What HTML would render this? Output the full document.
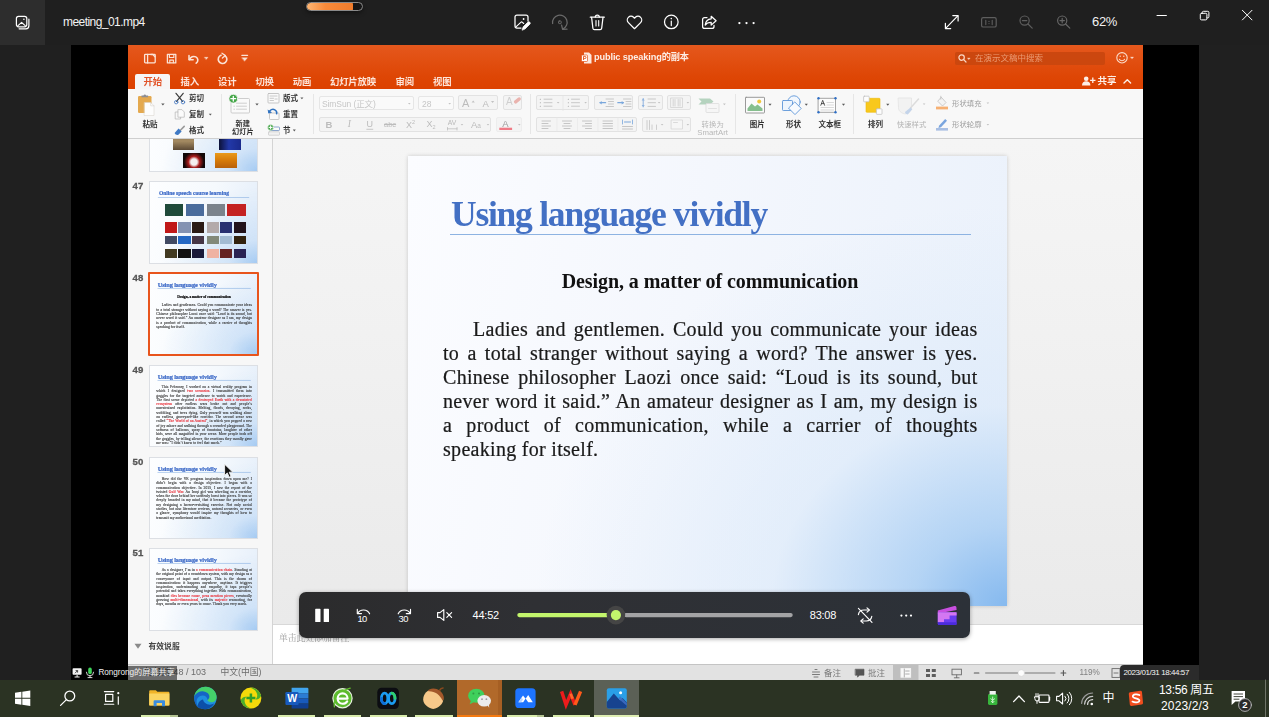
<!DOCTYPE html>
<html lang="zh">
<head>
<meta charset="utf-8">
<title>meeting_01.mp4</title>
<style>
html,body{margin:0;padding:0;background:#202020;}
body{width:1269px;height:717px;overflow:hidden;font-family:"Liberation Sans","Noto Sans CJK SC",sans-serif;}
#root{position:relative;width:1269px;height:717px;overflow:hidden;background:#202020;}
.abs{position:absolute;}
.t{position:absolute;white-space:nowrap;line-height:1;}
svg{position:absolute;overflow:visible;}
/* top bar */
#topbar{position:absolute;left:0;top:0;width:1269px;height:45px;background:#1f1f1f;}
#iconbox{position:absolute;left:0;top:0;width:45px;height:45px;background:#2d2d2d;}
/* video */
#video{position:absolute;left:71px;top:45px;width:1128px;height:635px;background:#000;}
#ppt{position:absolute;left:57px;top:0;width:1015px;height:635px;background:#ececec;overflow:hidden;}
#pptbar{position:absolute;left:0;top:0;width:1015px;height:45px;background:linear-gradient(#e5581d,#de4605 70%,#dc4100);}
#ribbon{position:absolute;left:0;top:44px;width:1015px;height:49px;background:#f8f8f8;border-bottom:1px solid #cfcfcf;}
#leftpane{position:absolute;left:0;top:94px;width:144px;height:525px;background:#f7f7f7;border-right:1px solid #d4d4d4;}
#edit{position:absolute;left:145px;top:94px;width:870px;height:486px;background:linear-gradient(#f5f5f5,#f1f1f1 40%,#eaeaea);}
#notes{position:absolute;left:145px;top:579px;width:870px;height:40px;background:#fff;border-top:1px solid #d8d8d8;}
#status{position:absolute;left:0;top:619px;width:1015px;height:16px;background:#e2e2e2;border-top:1px solid #c4c4c4;}
#slide{position:absolute;left:280px;top:111px;width:599px;height:450px;background:#fff;box-shadow:0 0 4px rgba(0,0,0,.18);}
.tab{top:32px;font-size:9.400px;font-weight:bold;color:#fde4d8;letter-spacing:-0.2px;}
.bx{position:absolute;border:1px solid #e2e2e2;background:#f4f4f4;border-radius:2px;box-sizing:border-box;}
.sp{position:absolute;top:5px;width:1px;height:40px;background:#e6e6e6;}
.rl{font-size:7.500px;font-weight:bold;color:#333;}
.gl{color:#bcbcbc;}
#ribsvg .ar{fill:#5a5a5a;stroke:none;}
#ribsvg .arl{fill:#c2c2c2;stroke:none;}
#slide{background:radial-gradient(ellipse 470px 400px at 100% 100%,rgba(128,182,238,.95) 0%,rgba(158,200,242,.72) 20%,rgba(205,226,248,.38) 50%,rgba(235,243,252,0) 100%),linear-gradient(100deg,#fbfcff 0%,#f4f7fd 45%,#eaf1fb 100%);}
#stitle{font:bold 35.500px "Liberation Serif",serif;color:#4370c4;letter-spacing:-1.24px;line-height:40px;}
#ssub{font:bold 20px "Liberation Serif",serif;color:#111;line-height:24px;letter-spacing:-0.07px;}
#sbody{-webkit-text-stroke:0.22px #1a1a1a;position:absolute;left:35px;top:161.300px;width:534.500px;font:20px "Liberation Serif",serif;color:#1a1a1a;letter-spacing:0.3px;}
#sbody .ln{height:24px;line-height:24px;white-space:nowrap;text-align:justify;text-align-last:justify;box-sizing:border-box;white-space:normal;overflow:visible;}
#leftpane{overflow:hidden;}
.th{position:absolute;left:22.300px;width:107.200px;height:80.600px;overflow:hidden;background:radial-gradient(ellipse 95px 76px at 100% 100%,rgba(150,194,240,.8) 0%,rgba(185,214,245,.5) 30%,rgba(225,238,251,0) 100%),linear-gradient(100deg,#fdfeff 0%,#f5f9fd 55%,#e4eefa 100%);box-shadow:0 0 0 1px #dcdfe4;}
.th i{position:absolute;display:block;}
.mini{position:absolute;left:0;top:0;width:599px;height:450px;transform:scale(0.179);transform-origin:0 0;}
.mt{position:absolute;left:43px;top:38px;font:bold 35.500px/40px "Liberation Serif",serif;color:#3f6cc8;-webkit-text-stroke:1.3px #3f6cc8;letter-spacing:-0.6px;white-space:nowrap;}
.mu{position:absolute;left:42px;top:78px;width:521px;height:3px;background:#7fa9e0;}
.ms{-webkit-text-stroke:1px #000;position:absolute;left:2px;width:600px;text-align:center;top:114px;font:bold 20px/24px "Liberation Serif",serif;color:#000;white-space:nowrap;}
.mb{position:absolute;left:35px;width:534.500px;font:20px/24px "Liberation Serif",serif;color:#3a3a3a;-webkit-text-stroke:0.65px #3a3a3a;text-align:justify;letter-spacing:0.55px;}
.mb .r{color:#e8343c;-webkit-text-stroke:0.8px #e8343c;font-weight:normal;}
.tn{left:4.500px;font-size:9.600px;font-weight:bold;color:#555;-webkit-text-stroke:0.3px #555;letter-spacing:0.2px;margin-top:-1px;}
.st{font-size:8.500px;color:#6b6b6b;}
#pptbar,#ribbon,#leftpane,#slide,#status,#notes{filter:blur(0.5px);}
/* taskbar */
#taskbar{position:absolute;left:0;top:680px;width:1269px;height:37px;background:#2b3323;}
.ind{position:absolute;top:35px;height:2px;background:#d9ecac;}
.ind.d{background:#b4c392;}
/* control bar */
#ctrl{position:absolute;left:299px;top:592px;width:671px;height:46px;background:linear-gradient(90deg,#2b2b2c 0%,#2f3034 35%,#2c3138 100%);border-radius:7px;box-shadow:0 1px 4px rgba(0,0,0,.35);}
</style>
</head>
<body>
<div id="root">

<!-- ===== TOP BAR ===== -->
<div id="topbar">
  <div id="iconbox"></div>
  <svg style="left:0;top:0" width="45" height="45" viewBox="0 0 45 45" fill="none" stroke="#fff" stroke-width="1.2" stroke-linecap="round" stroke-linejoin="round">
    <rect x="16.4" y="16.4" width="10.4" height="10.4" rx="2.2"/>
    <path d="M28.9 19.2v6.6a3 3 0 0 1-3 3h-6.8"/>
    <path d="M18 25.6l3.6-3.3 3.6 3.3" stroke-width="1.1"/>
    <circle cx="23.9" cy="19.3" r="0.8" fill="#fff" stroke="none"/>
  </svg>
  <div class="t" style="left:63px;top:16px;font-size:12px;letter-spacing:-0.55px;color:#f2f2f2;">meeting_01.mp4</div>
  <!-- loading pill -->
  <div class="abs" style="left:306px;top:2px;width:55px;height:6.500px;border:1px solid #8a8a8a;border-radius:5px;background:#161616;overflow:hidden;box-shadow:0 2px 4px rgba(0,0,0,.4);">
    <div class="abs" style="left:0;top:0;width:46px;height:7px;background:linear-gradient(90deg,#ffb673,#f88a3a 40%,#f07c2c);border-radius:4px 1px 1px 4px;"></div>
  </div>
  <!-- center icons -->
  <svg style="left:505px;top:5px" width="270" height="35" viewBox="505 5 270 35" fill="none" stroke="#fff" stroke-width="1.25" stroke-linecap="round" stroke-linejoin="round">
    <!-- edit image -->
    <path d="M528 21v-4a2 2 0 0 0-2-2h-9a2 2 0 0 0-2 2v9a2 2 0 0 0 2 2h4"/>
    <path d="M516.2 26.6l4.6-4.3a1.2 1.2 0 0 1 1.6 0l1.3 1.2" stroke-width="1.1"/>
    <circle cx="523.6" cy="19" r="0.9" fill="#fff" stroke="none"/>
    <path d="M522.2 29.8l1-3 4.6-4.6a1.3 1.3 0 0 1 2 2l-4.6 4.6z" fill="#fff" stroke-width="0.8"/>
    <!-- rotate (disabled) -->
    <g stroke="#6a6a6a">
      <path d="M552.6 23.5a7.3 7.3 0 1 1 10.2 5.6"/>
      <path d="M561.6 25.2l1 4.2 4.4-.2"/>
      <rect x="558.6" y="21" width="2.6" height="2.6" rx="0.6" stroke-width="1"/>
    </g>
    <!-- trash -->
    <path d="M590.3 17.2h14"/>
    <path d="M595.3 17a2 2 0 0 1 4 0"/>
    <path d="M591.6 17.4l1.3 10.8a1.6 1.6 0 0 0 1.6 1.4h5.6a1.6 1.6 0 0 0 1.6-1.4l1.3-10.8"/>
    <path d="M596 20.6v5.4M598.7 20.6v5.4" stroke-width="1.1"/>
    <!-- heart -->
    <path d="M634.5 28.7l-6.1-6.1a3.7 3.7 0 0 1 5.2-5.3l.9.9.9-.9a3.7 3.7 0 0 1 5.2 5.3z"/>
    <!-- info -->
    <circle cx="671.3" cy="21.9" r="6.8"/>
    <path d="M671.3 21v4.6" stroke-width="1.2"/>
    <circle cx="671.3" cy="18.6" r="0.8" fill="#fff" stroke="none"/>
    <!-- share -->
    <path d="M707 17.6h-2.4a2 2 0 0 0-2 2v6.8a2 2 0 0 0 2 2h7.4a2 2 0 0 0 2-2v-1"/>
    <path d="M711.2 16.3l4.9 4.4-4.9 4.4v-2.6c-3 0-4.800.8-6 2.600.3-3.400 2.200-6 6-6.300z"/>
    <!-- dots -->
    <g fill="#fff" stroke="none"><circle cx="739.4" cy="23.100" r="1.15"/><circle cx="746.500" cy="23.100" r="1.15"/><circle cx="753.600" cy="23.100" r="1.15"/></g>
  </svg>
  <!-- right icons -->
  <svg style="left:930px;top:5px" width="339" height="35" viewBox="930 5 339 35" fill="none" stroke="#fff" stroke-width="1.2" stroke-linecap="round" stroke-linejoin="round">
    <!-- expand -->
    <path d="M945.6 28.300l12.200-12.400"/>
    <path d="M952.8 15.600h5.300v5.300M945.400 23.300v5.300h5.300"/>
    <!-- 1:1 (disabled) -->
    <g stroke="#5e5e5e">
      <rect x="981.600" y="17.600" width="14.600" height="9.400" rx="1.600"/>
      <path d="M985.800 20.200v4.400M992.200 20.200v4.400" stroke-width="1.100"/>
      <path d="M989 21.300v.1M989 23.500v.1" stroke-width="1.200"/>
    </g>
    <!-- zoom out (disabled) -->
    <g stroke="#5e5e5e">
      <circle cx="1024.600" cy="20.600" r="4.600"/>
      <path d="M1028 24l4.200 4.200M1022.400 20.600h4.400"/>
    </g>
    <!-- zoom in (disabled) -->
    <g stroke="#666">
      <circle cx="1062.200" cy="20.600" r="4.600"/>
      <path d="M1065.600 24l4.200 4.200M1060 20.600h4.400M1062.200 18.400v4.400"/>
    </g>
    <!-- window controls -->
    <path d="M1157 15.500h9.400" stroke-width="1"/>
    <rect x="1200.300" y="13.300" width="6.600" height="6.600" rx="1.200" stroke-width="1"/>
    <path d="M1202.300 13.300v-.8a1.200 1.200 0 0 1 1.200-1.200h4.200a1.200 1.200 0 0 1 1.200 1.200v4.200a1.200 1.200 0 0 1-1.200 1.200h-.8" stroke-width="1"/>
    <path d="M1242.400 10.300l9.600 9.600M1252 10.300l-9.600 9.600" stroke-width="1"/>
  </svg>
  <div class="t" style="left:1092px;top:15px;font-size:13px;letter-spacing:-0.3px;color:#f2f2f2;">62%</div>
</div>

<!-- ===== VIDEO FRAME ===== -->
<div id="video">
  <div id="ppt">
    <div id="pptbar">
      <!-- quick access -->
      <svg style="left:0;top:0" width="140" height="28" viewBox="0 0 140 28" fill="none" stroke="#fbe3d6" stroke-width="1.3" stroke-linejoin="round" stroke-linecap="round">
        <rect x="16.600" y="9.300" width="10.600" height="8.600" rx="0.800"/>
        <path d="M19.600 9.300v8.600M22.800 9.500h2l2.200 2.200"/>
        <path d="M39.400 9.300h8.400v8.600h-8.400z"/>
        <path d="M41.400 9.500v3h4.400v-3M41.800 17.700v-2.600h3.600v2.600" stroke-width="1.100"/>
        <path d="M61 10.600v4.200h4.200" stroke-width="1.500"/>
        <path d="M61.400 14.600c1.200-2.600 4-3.900 6.400-2.700 2.500 1.300 2.800 4.400.4 6.300" stroke-width="1.600"/>
        <path d="M76.600 12.300h3.400l-1.700 2z" fill="#fbe3d6" stroke-width="0.400"/>
        <path d="M93 10.200a4.300 4.300 0 1 0 4.200.6" stroke-width="1.600"/>
        <path d="M94 8.200l3.400 2.400-3 2.400" stroke-width="1.300"/>
        <path d="M113.800 10.300h5.800" stroke-width="1.200"/>
        <path d="M114 12.800h5.400l-2.700 3.200z" fill="#fbe3d6" stroke-width="0.400"/>
      </svg>
      <!-- title -->
      <svg style="left:452px;top:6px" width="14" height="14" viewBox="0 0 14 14" fill="none">
        <path d="M4 1.500h5l2.500 2.500v8.500h-7.500z" fill="#fde9df"/>
        <rect x="1.500" y="4" width="6" height="6.500" rx="0.800" fill="#fff" stroke="#e2531a" stroke-width="0.700"/>
        <path d="M3.500 9v-3.600h1.400a1.100 1.100 0 0 1 0 2.200h-1.400" stroke="#e2531a" stroke-width="0.900"/>
      </svg>
      <div class="t" style="left:466px;top:8.200px;font-size:9.200px;font-weight:bold;color:#fdeee6;letter-spacing:-0.12px;">public speaking的副本</div>
      <!-- search -->
      <div class="abs" style="left:827px;top:7px;width:150px;height:13px;background:#c9470f;border-radius:2px;opacity:.95;"></div>
      <svg style="left:829px;top:7px" width="20" height="13" viewBox="0 0 20 13" fill="none" stroke="#fbd9c6" stroke-width="1.200" stroke-linecap="round">
        <circle cx="4.600" cy="5.600" r="2.700"/><path d="M6.700 7.700l2.300 2.300"/>
        <path d="M10.600 6h2.600l-1.300 1.600z" fill="#fbd9c6" stroke-width="0.300"/>
      </svg>
      <div class="t" style="left:847px;top:9px;font-size:8.500px;color:#eb9a72;">在演示文稿中搜索</div>
      <!-- smile -->
      <svg style="left:985px;top:5px" width="26" height="16" viewBox="0 0 26 16" fill="none" stroke="#fbdccb" stroke-width="1.100" stroke-linecap="round">
        <circle cx="9" cy="7.800" r="5.200"/>
        <path d="M6.400 9.300a3 3 0 0 0 5.200 0"/>
        <circle cx="7.200" cy="6.300" r="0.700" fill="#fbdccb" stroke="none"/><circle cx="10.800" cy="6.300" r="0.700" fill="#fbdccb" stroke="none"/>
        <path d="M17.600 7h3l-1.500 1.800z" fill="#fbdccb" stroke-width="0.300"/>
      </svg>
      <!-- tabs -->
      <div class="abs" style="left:7px;top:29px;width:35px;height:17px;background:#f6f6f6;border-radius:2px 2px 0 0;"></div>
      <div class="t tab" style="left:15.500px;color:#e2552a;">开始</div>
      <div class="t tab" style="left:52.500px;">插入</div>
      <div class="t tab" style="left:90px;">设计</div>
      <div class="t tab" style="left:127.400px;">切换</div>
      <div class="t tab" style="left:164.800px;">动画</div>
      <div class="t tab" style="left:202px;">幻灯片放映</div>
      <div class="t tab" style="left:267.500px;">审阅</div>
      <div class="t tab" style="left:305px;">视图</div>
      <!-- share -->
      <svg style="left:952px;top:29px" width="52" height="14" viewBox="0 0 52 14" fill="#fdeee6" stroke="none">
        <circle cx="6.200" cy="4.800" r="2.300"/>
        <path d="M2 11.600c0-3 1.800-4.300 4.200-4.300s4.200 1.300 4.200 4.300z"/>
        <path d="M12.800 3.600v5.400M10.100 6.300h5.400" stroke="#fdeee6" stroke-width="1.300" fill="none"/>
        <path d="M44 9l3.300-3.300 3.300 3.300" stroke="#fdeee6" stroke-width="1.400" fill="none" stroke-linecap="round" stroke-linejoin="round"/>
      </svg>
      <div class="t" style="left:969.500px;top:31px;font-size:9.500px;font-weight:bold;color:#fdeee6;">共享</div>
    </div>
    <div id="ribbon">
      <!-- button group boxes -->
      <div class="bx" style="left:191px;top:7px;width:95px;height:14px;background:#fafafa;border-color:#e6e6e6;"></div>
      <div class="bx" style="left:290px;top:7px;width:36px;height:14px;background:#fafafa;border-color:#e6e6e6;"></div>
      <div class="bx" style="left:330px;top:6px;width:40px;height:15px;"></div>
      <div class="bx" style="left:375px;top:6px;width:19px;height:15px;"></div>
      <div class="bx" style="left:191px;top:28px;width:172px;height:15px;"></div>
      <div class="bx" style="left:368px;top:28px;width:26px;height:15px;border-color:#ededed;"></div>
      <div class="bx" style="left:408px;top:6px;width:53px;height:15px;"></div>
      <div class="bx" style="left:466px;top:6px;width:39px;height:15px;"></div>
      <div class="bx" style="left:510px;top:6px;width:25px;height:15px;"></div>
      <div class="bx" style="left:539px;top:6px;width:24px;height:15px;"></div>
      <div class="bx" style="left:408px;top:28px;width:101px;height:15px;"></div>
      <div class="bx" style="left:514px;top:28px;width:49px;height:15px;"></div>
      <!-- separators -->
      <div class="sp" style="left:93px;"></div><div class="sp" style="left:185px;"></div><div class="sp" style="left:402px;"></div>
      <div class="sp" style="left:607px;"></div><div class="sp" style="left:725px;"></div>
      <svg id="ribsvg" style="left:0;top:0" width="1015" height="49" viewBox="0 0 1015 49" fill="none" stroke-linecap="round" stroke-linejoin="round">
        <!-- paste -->
        <rect x="10" y="7" width="13.500" height="17" rx="1.200" fill="#e4a94f"/>
        <path d="M13.500 7.600v-1.200h2a1.400 1.400 0 0 1 2.600 0h2v1.800h-6.600z" fill="#8d8d92"/>
        <path d="M16.500 13.500h6.200l3.300 3.300v9.700h-9.500z" fill="#fdfdfd" stroke="#d6d0c8" stroke-width="0.500"/>
        <path d="M22.700 13.500v3.300h3.300" stroke="#d0cbc4" stroke-width="0.500"/>
        <path class="ar" d="M33.200 14.600h3.400l-1.700 2z"/>
        <!-- scissors -->
        <path d="M48 4.300l6.600 8M55.200 4.300l-6.600 8" stroke="#3c3c3c" stroke-width="1.200"/>
        <circle cx="48.200" cy="13.200" r="1.700" stroke="#4f7fc4" stroke-width="0.900"/><circle cx="55" cy="13.200" r="1.700" stroke="#4f7fc4" stroke-width="0.900"/>
        <!-- copy -->
        <path d="M50.300 20.600h3.600l2.400 2.400v5.200h-6z" fill="#fbfbfb" stroke="#b4b4b4" stroke-width="0.700"/>
        <path d="M49.800 23h-2.600v7h5.400v-1.600" stroke="#b4b4b4" stroke-width="0.700"/>
        <path class="ar" d="M80.800 24.800h3l-1.500 1.800z"/>
        <!-- format brush -->
        <path d="M56.200 37.400l-3.800 3.800" stroke="#9a9a9a" stroke-width="1.600"/>
        <path d="M50.600 39.600l3 3-3.200 3.200c-1.400.600-3.400-.400-3.800-1.800z" fill="#3f79c4"/>
        <!-- new slide -->
        <rect x="103" y="9.500" width="18.500" height="14.500" rx="1" fill="#fafafa" stroke="#c2c2c2" stroke-width="0.800"/>
        <path d="M108.500 14.200h10M108.500 17.200h10M108.500 20.200h10" stroke="#c9c9c9" stroke-width="0.900"/>
        <path d="M106 17.200h.3M106 20.200h.3" stroke="#bdbdbd" stroke-width="1"/>
        <circle cx="105.300" cy="9.700" r="4.400" fill="#44a648" stroke="#f6f6f6" stroke-width="0.800"/>
        <path d="M105.300 7.300v4.800M102.900 9.700h4.800" stroke="#fff" stroke-width="1.300"/>
        <path class="ar" d="M127.300 14.600h3.400l-1.700 2z"/>
        <!-- layout -->
        <rect x="140" y="4.500" width="11" height="9.500" rx="0.800" fill="#fafafa" stroke="#b9b9b9" stroke-width="0.800"/>
        <path d="M142 7h7M142 9.300h3.500M142 11.500h3.500M147 10h2.200" stroke="#bdbdbd" stroke-width="0.800"/>
        <path class="ar" d="M172.400 8.400h3l-1.500 1.800z"/>
        <!-- reset -->
        <rect x="141.500" y="24" width="9.500" height="6.500" rx="0.800" fill="#fafafa" stroke="#bcbcbc" stroke-width="0.800"/>
        <path d="M141 23.400c.800-2.600 3.600-3.800 5.800-2.600 1.600.900 2.200 2.600 1.800 4" stroke="#2f72c0" stroke-width="1.500"/>
        <path d="M139.600 20.600l.8 3.800 3.700-.9z" fill="#2f72c0"/>
        <!-- section -->
        <rect x="142" y="38" width="9.500" height="3.500" rx="0.700" fill="#fafafa" stroke="#6e8fc0" stroke-width="0.800"/>
        <rect x="140.500" y="42.800" width="11" height="3.400" rx="0.700" fill="#f1f1f1" stroke="#c6c6c6" stroke-width="0.700"/>
        <circle cx="142.600" cy="38.400" r="3" fill="#44a648" stroke="#f6f6f6" stroke-width="0.600"/>
        <path d="M142.600 36.800v3.200M141 38.400h3.200" stroke="#fff" stroke-width="1"/>
        <path class="ar" d="M164.800 40.600h3l-1.500 1.800z"/>
        <!-- font boxes arrows -->
        <path class="arl" d="M280 14h2.600l-1.300 1.500z"/><path class="arl" d="M320.400 14h2.600l-1.300 1.500z"/>
        <path class="arl" d="M343.600 13.600h3.200l-1.600-2zM363 12h3.200l-1.600 2z"/>
        <!-- clear format -->
        <path d="M386 12l4-3.300a1.600 1.600 0 0 1 2.300 2.600l-4 3.300a2 2 0 0 1-2.300-2.600z" fill="#eab3ae"/>
        <!-- underline for U -->
        <path d="M238.800 40.300h6" stroke="#b3b3b3" stroke-width="0.700"/>
        <!-- AV -->
        <path d="M319.500 39.800h9.500M319.500 38.500v2.600M329 38.500v2.600" stroke="#b9b9b9" stroke-width="0.700"/>
        <path class="arl" d="M332.700 35h2.600l-1.300 1.500zM358.700 35h2.600l-1.300 1.500zM390 35h2.600l-1.300 1.500z"/>
        <!-- font color bar -->
        <rect x="371.300" y="38.700" width="12.800" height="2.300" fill="#f07b86"/>
        <!-- bullets -->
        <g stroke="#c3c3c3" stroke-width="0.900">
          <path d="M416 10.200h8M416 13.700h8M416 17.200h8"/>
          <path d="M443.500 10.200h8M443.500 13.700h8M443.500 17.200h8"/>
        </g>
        <g stroke="#b1b1b1" stroke-width="1.100"><path d="M412.300 10.200h.2M412.300 13.700h.2M412.300 17.200h.2M440.300 10.200h.2M440.300 13.700h.2M440.300 17.200h.2"/></g>
        <path class="arl" d="M428.800 13h2.600l-1.300 1.500zM456.300 13h2.600l-1.300 1.500z"/>
        <path d="M435 6.500v15" stroke="#e3e3e3" stroke-width="0.700"/>
        <!-- indent -->
        <g stroke="#c3c3c3" stroke-width="0.900">
          <path d="M478 10h7.500M480.500 12.500h5M480.500 15h5M478 17.500h7.500"/>
          <path d="M498 10h7.500M500.500 12.500h5M500.500 15h5M498 17.500h7.500" transform="translate(-2.500 0)"/>
        </g>
        <path d="M472 13.700h5.600" stroke="#7aa7dc" stroke-width="1.200"/><path d="M471.400 13.700l2.300-1.800v3.600z" fill="#7aa7dc"/>
        <path d="M489.800 13.700h5.600" stroke="#7aa7dc" stroke-width="1.200"/><path d="M496 13.700l-2.300-1.800v3.600z" fill="#7aa7dc"/>
        <!-- line spacing -->
        <path d="M520 10h7.500M520 13.700h7.500M520 17.400h7.500" stroke="#c3c3c3" stroke-width="0.900"/>
        <path d="M515.200 9.500v8.400" stroke="#8fb3df" stroke-width="1"/><path d="M513.600 11.400l1.600-2 1.600 2zM513.600 16l1.600 2 1.600-2z" fill="#8fb3df"/>
        <path class="arl" d="M529.800 13h2.600l-1.300 1.500z"/>
        <!-- columns -->
        <rect x="543" y="9" width="11.500" height="9.500" fill="#f4f4f4" stroke="#cfcfcf" stroke-width="0.700"/>
        <path d="M545.200 10.500v6.500M547 10.500v6.500M550.200 10.500v6.500M552 10.500v6.500" stroke="#cdcdcd" stroke-width="0.800"/>
        <path class="arl" d="M558.600 13h2.600l-1.300 1.500z"/>
        <!-- align -->
        <g stroke="#c0c0c0" stroke-width="0.900">
          <path d="M414 32h8.500M414 34.500h6M414 37h8.500M414 39.500h6"/>
          <path d="M434.500 32h9M436 34.500h6M434.500 37h9M436 39.500h6"/>
          <path d="M454.500 32h9M457.500 34.500h6M454.500 37h9M457.500 39.500h6"/>
          <path d="M475 32h9.500M475 34.500h9.500M475 37h9.500M475 39.500h9.500"/>
          <path d="M494.500 37.500h10M494.500 40h10"/>
        </g>
        <path d="M429 28.500v14M449.500 28.500v14M470 28.500v14M490 28.500v14" stroke="#e6e6e6" stroke-width="0.600"/>
        <path d="M494.500 31v4M504.500 31v4" stroke="#7aa7dc" stroke-width="0.800"/>
        <path d="M496.500 33h6" stroke="#7aa7dc" stroke-width="1"/>
        <!-- text direction -->
        <path d="M519 31.500v9M521.500 31.500v9M524 36v4.500M528.500 36v4.500" stroke="#c4c4c4" stroke-width="0.800"/>
        <path class="arl" d="M532.800 35h2.600l-1.300 1.500z"/>
        <rect x="543.500" y="31" width="11" height="9" fill="#f6f6f6" stroke="#d2d2d2" stroke-width="0.700"/>
        <path d="M545.500 33.500h4" stroke="#cfcfcf" stroke-width="0.700"/>
        <path class="arl" d="M558.600 35h2.600l-1.300 1.500z"/>
        <!-- smartart -->
        <path d="M570.500 9.500h11.500l3.500 3-3.500 3h-11.500l3-3z" fill="#b5d3bf"/>
        <rect x="578" y="14.500" width="13" height="9" rx="0.800" fill="#f6f6f6" stroke="#d9d9d9" stroke-width="0.700"/>
        <path d="M580.500 19.500h8" stroke="#dcdcdc" stroke-width="0.800"/>
        <path class="arl" d="M595 14.600h2.800l-1.400 1.600z"/>
        <!-- picture -->
        <rect x="617.500" y="8.300" width="19" height="15.700" rx="0.600" fill="#fbfbfb" stroke="#8e8e8e" stroke-width="0.900"/>
        <path d="M619.500 22v-2.500l4-5 3.500 3 2.500-2 5 4v2.500z" fill="#86bf8e"/>
        <circle cx="631.200" cy="12.600" r="2" fill="#f0c73a"/>
        <path class="ar" d="M640.400 14.800h3.200l-1.600 1.900z"/>
        <!-- shapes -->
        <circle cx="666" cy="13" r="6.200" fill="#f2f7fd" stroke="#5e95d8" stroke-width="0.900"/>
        <rect x="654.500" y="11.500" width="10" height="10" rx="0.800" fill="#eef5fd" stroke="#5e95d8" stroke-width="0.900"/>
        <path d="M667 13.200l6.200 6.200-6.200 6.200-6.200-6.200z" fill="#f7fafe" stroke="#5e95d8" stroke-width="0.900"/>
        <path class="ar" d="M676.700 14.800h3.200l-1.600 1.900z"/>
        <!-- textbox -->
        <rect x="690.500" y="9.300" width="17" height="14" fill="#fdfdfd" stroke="#9a9a9a" stroke-width="0.900"/>
        <path d="M699 13.500h6.500M699 16h6.500M693 18.500h12.500M693 21h12.500" stroke="#cfcfcf" stroke-width="0.800"/>
        <path d="M692.800 16.300l1.900-5 1.900 5M693.500 14.600h2.400" stroke="#333" stroke-width="0.800"/>
        <g fill="#2f6fc6"><circle cx="690.500" cy="9.300" r="1.200"/><circle cx="707.500" cy="9.300" r="1.200"/><circle cx="690.500" cy="23.300" r="1.200"/><circle cx="707.500" cy="23.300" r="1.200"/></g>
        <path class="ar" d="M713.900 14.800h3.200l-1.600 1.900z"/>
        <!-- arrange -->
        <rect x="738" y="9.300" width="14" height="14" rx="0.800" fill="#f8c81c" stroke="#efb90a" stroke-width="0.600"/>
        <rect x="735.600" y="7.200" width="5.600" height="5.600" rx="0.700" fill="#fdfdfd" stroke="#bdbdbd" stroke-width="0.700"/>
        <rect x="748.400" y="19.800" width="5.600" height="5.600" rx="0.700" fill="#fdfdfd" stroke="#bdbdbd" stroke-width="0.700"/>
        <path class="ar" d="M758.200 14.800h3.200l-1.600 1.900z"/>
        <!-- quick styles -->
        <path d="M770.500 9h13v10c0 3-2.500 5-6.500 6-4-1-6.500-3-6.500-6z" fill="#f2f2f2" stroke="#e1e1e1" stroke-width="0.700"/>
        <path d="M790.500 10l-8 9" stroke="#dcdcdc" stroke-width="1.500"/>
        <path d="M782.500 18.500l1.800 1.800-4.500 5.200c-1.500 0-2.700-1-2.800-2.500z" fill="#c4d4ea"/>
        <path class="arl" d="M794.800 14.600h2.600l-1.300 1.500z"/>
        <!-- shape fill -->
        <path d="M813.500 8.500l4.500 5-3.500 3.500-4.500-4.500z" stroke="#b9b9b9" stroke-width="0.700" fill="#f4f4f4"/>
        <path d="M812.800 7.200v3" stroke="#b9b9b9" stroke-width="0.700"/>
        <rect x="808" y="17.600" width="12" height="2.800" fill="#f6b073"/>
        <path class="arl" d="M858.600 13.600h2.600l-1.300 1.500z"/>
        <!-- shape outline -->
        <path d="M817.200 30l1.800 1.800-6 6.400-2.600.8.800-2.600z" fill="#7aa5de"/>
        <rect x="808" y="39" width="12" height="2.600" fill="#a9bfe3"/>
        <path class="arl" d="M858.600 34.900h2.600l-1.300 1.500z"/>
      </svg>
      <!-- labels -->
      <div class="t rl" style="left:14.500px;top:31.500px;">粘贴</div>
      <div class="t rl" style="left:61px;top:5.500px;">剪切</div>
      <div class="t rl" style="left:61px;top:21.800px;">复制</div>
      <div class="t rl" style="left:61px;top:37.800px;">格式</div>
      <div class="t rl" style="left:107.500px;top:31.200px;font-size:7.200px;">新建</div>
      <div class="t rl" style="left:104px;top:39.200px;font-size:7.200px;">幻灯片</div>
      <div class="t rl" style="left:155px;top:5.500px;">版式</div>
      <div class="t rl" style="left:155px;top:21.800px;">重置</div>
      <div class="t rl" style="left:155px;top:37.800px;">节</div>
      <div class="t" style="left:194px;top:10.500px;font-size:8.500px;color:#c6c6c6;letter-spacing:-0.1px;">SimSun (正文)</div>
      <div class="t" style="left:294px;top:10.500px;font-size:8.500px;color:#c6c6c6;">28</div>
      <div class="t gl" style="left:334px;top:8.500px;font-size:11px;">A</div>
      <div class="t gl" style="left:354.500px;top:9.800px;font-size:9.500px;">A</div>
      <div class="t gl" style="left:378px;top:8px;font-size:10px;color:#cfcfcf;">A</div>
      <div class="t gl" style="left:197.500px;top:31px;font-size:9.500px;font-weight:bold;">B</div>
      <div class="t gl" style="left:219.800px;top:31px;font-size:9.500px;font-style:italic;font-family:'Liberation Serif',serif;">I</div>
      <div class="t gl" style="left:238.600px;top:31px;font-size:9px;">U</div>
      <div class="t gl" style="left:256px;top:32px;font-size:7.500px;text-decoration:line-through;">abc</div>
      <div class="t gl" style="left:278px;top:32px;font-size:9px;">X<span style="font-size:5.500px;position:relative;top:-4px;">2</span></div>
      <div class="t gl" style="left:298.500px;top:31px;font-size:9px;">X<span style="font-size:5.500px;position:relative;top:1.500px;">2</span></div>
      <div class="t gl" style="left:319.800px;top:30.500px;font-size:6.800px;color:#b9b9b9;">AV</div>
      <div class="t gl" style="left:343px;top:31px;font-size:9.500px;">A<span style="font-size:6.500px;">a</span></div>
      <div class="t" style="left:374.200px;top:29.800px;font-size:9.500px;color:#9b9b9b;">A</div>
      <div class="t" style="left:573.600px;top:32.200px;font-size:7.400px;color:#b8b8b8;">转换为</div>
      <div class="t" style="left:569.200px;top:39.600px;font-size:7.800px;color:#b8b8b8;">SmartArt</div>
      <div class="t rl" style="left:621.800px;top:31.500px;">图片</div>
      <div class="t rl" style="left:658px;top:31.500px;">形状</div>
      <div class="t rl" style="left:690.500px;top:31.500px;">文本框</div>
      <div class="t rl" style="left:740px;top:31.500px;">排列</div>
      <div class="t" style="left:768.800px;top:31.500px;font-size:7.400px;color:#b4b4b4;">快速样式</div>
      <div class="t" style="left:824px;top:10.600px;font-size:7.400px;color:#9d9d9d;">形状填充</div>
      <div class="t" style="left:824px;top:31.900px;font-size:7.400px;color:#9d9d9d;">形状轮廓</div>
    </div>
    <div id="leftpane">
      <div class="th" style="top:-48.8px;">
        <i style="left:22.5px;top:42px;width:21.5px;height:18px;background:linear-gradient(#7a6748,#a58b62 50%,#5c4a36);"></i>
        <i style="left:68.500px;top:42px;width:22.500px;height:18px;background:linear-gradient(90deg,#0d1238,#2238a8 45%,#1a2a8c);"></i>
        <i style="left:32.500px;top:62.500px;width:22px;height:15px;background:radial-gradient(circle at 50% 60%,#f4eeee 0 22%,#a81c1c 40%,#120808 70%);"></i>
        <i style="left:64.500px;top:62.500px;width:22.500px;height:15px;background:linear-gradient(#e99a1a,#d67a08 50%,#b8600a);"></i>
      </div>
      <div class="th" style="top:43.0px;">
        <div class="mini"><div class="mt" style="font-size:31px;letter-spacing:-0.2px;top:42px;left:50px;">Online speech course learning</div><div class="mu" style="top:85px;left:44px;width:510px;"></div></div>
        <i style="left:14.3px;top:22.300px;width:18.400px;height:11.400px;background:#1f4a3a;"></i><i style="left:35.5px;top:22.300px;width:18.400px;height:11.400px;background:#4a6c9c;"></i><i style="left:56.3px;top:22.300px;width:18.400px;height:11.400px;background:#7b838c;"></i><i style="left:76.9px;top:22.300px;width:18.400px;height:11.400px;background:#c42222;"></i><i style="left:14.3px;top:40.3px;width:12.300px;height:10.5px;background:#c01818;"></i><i style="left:28.1px;top:40.3px;width:12.300px;height:10.5px;background:#8392b2;"></i><i style="left:41.9px;top:40.3px;width:12.300px;height:10.5px;background:#2a1a14;"></i><i style="left:56.3px;top:40.3px;width:12.300px;height:10.5px;background:#b3aaaa;"></i><i style="left:69.5px;top:40.3px;width:12.300px;height:10.5px;background:#283070;"></i><i style="left:83.3px;top:40.3px;width:12.300px;height:10.5px;background:#22121a;"></i><i style="left:14.3px;top:53.9px;width:12.300px;height:8.5px;background:#414a63;"></i><i style="left:28.1px;top:53.9px;width:12.300px;height:8.5px;background:#2468c4;"></i><i style="left:41.9px;top:53.9px;width:12.300px;height:8.5px;background:#463646;"></i><i style="left:56.3px;top:53.9px;width:12.300px;height:8.5px;background:#82897a;"></i><i style="left:69.5px;top:53.9px;width:12.300px;height:8.5px;background:#a3bbd2;"></i><i style="left:83.3px;top:53.9px;width:12.300px;height:8.5px;background:#32220e;"></i><i style="left:14.3px;top:67.4px;width:12.300px;height:8.2px;background:#423a22;"></i><i style="left:28.1px;top:67.4px;width:12.300px;height:8.2px;background:#121212;"></i><i style="left:41.9px;top:67.4px;width:12.300px;height:8.2px;background:#1a1a3a;"></i><i style="left:56.3px;top:67.4px;width:12.300px;height:8.2px;background:#efb2a2;"></i><i style="left:69.5px;top:67.4px;width:12.300px;height:8.2px;background:#642222;"></i><i style="left:83.3px;top:67.4px;width:12.300px;height:8.2px;background:#2a2252;"></i>
      </div>
      <div class="th" style="top:134.8px;">
        <div class="mini">
          <div class="mt">Using language vividly</div><div class="mu"></div>
          <div class="ms">Design, a matter of communication</div>
          <div class="mb" style="top:162px;"><span style="padding-left:30px"></span>Ladies and gentlemen. Could you communicate your ideas to a total stranger without saying a word? The answer is yes. Chinese philosopher Laozi once said: “Loud is its sound, but never word it said.” An amateur designer as I am, my design is a product of communication, while a carrier of thoughts speaking for itself.</div>
        </div>
      </div>
      <div class="th" style="top:226.7px;">
        <div class="mini">
          <div class="mt">Using language vividly</div><div class="mu"></div>
          <div class="mb" style="top:104px;"><span style="padding-left:30px"></span>This February, I worked on a virtual reality program in which I designed <b class="r">two scenarios</b>. I transmitted them into goggles for the targeted audience to watch and experience. The first scene depicted <b class="r">a destroyed Earth with a devastated ecosystem</b> after endless wars broke out and people’s unrestrained exploitation. Melting, floods, decaying, rocks, wobbling, and trees dying. Only yourself was walking alone on endless, graveyard-like corridor. The second scene was called <b class="r">“The World of an Austral”</b>, in which you popped a row of joy ashore and walking through a crowded playground. The softness of balloons, spray of fountains, laughter of other kids, were all magnified in your scene. More people took off the goggles, by telling silence, the reactions they usually gave me was: “I didn’t know to feel that much.”</div>
        </div>
      </div>
      <div class="th" style="top:318.5px;">
        <div class="mini">
          <div class="mt">Using language vividly</div><div class="mu"></div>
          <div class="mb" style="top:104px;"><span style="padding-left:30px"></span>How did the VR program inspiration dawn upon me? I didn’t begin with a design objective. I began with a communication objective. In 2015, I saw the report of the twisted <b class="r">Gulf War</b>. An Iraqi girl was wheeling on a corridor, when the door behind her suddenly burst into pieces. It was so deeply branded in my mind, that it became the prototype of my designing a horror-revisiting exercise. Not only social studies, but also literature reviews, natural sceneries, or even a glance, symphony would inspire my thoughts of how to transmit my audiovisual meditation.</div>
        </div>
      </div>
      <div class="th" style="top:410.4px;">
        <div class="mini">
          <div class="mt">Using language vividly</div><div class="mu"></div>
          <div class="mb" style="top:104px;"><span style="padding-left:30px"></span>As a designer, I’m in <b class="r">a communication chain</b>. Standing at the original point of a countdown system, with my design as a conveyance of input and output. This is the charm of communication: it happens anywhere, anytime. It triggers inspiration, understanding and empathy, it taps people’s potential and takes everything together. With communication, mankind <b class="r">dies because cause, pens mention pieces</b>, eventually growing <b class="r">multi-dimensional</b>, with its <b class="r">majestic</b> resonating, for days, months or even years to come. Thank you very much.</div>
        </div>
      </div>
      <div class="t tn" style="top:43.0px;">47</div>
      <div class="t tn" style="top:134.8px;">48</div>
      <div class="t tn" style="top:226.7px;">49</div>
      <div class="t tn" style="top:318.5px;">50</div>
      <div class="t tn" style="top:410.4px;">51</div>
      <div class="abs" style="left:20px;top:133px;width:111px;height:84px;border:2px solid #e8541c;box-sizing:border-box;border-radius:1px;"></div>
      <div class="t" style="left:20.500px;top:503.500px;font-size:7.800px;font-weight:bold;color:#444;">有效说服</div>
      <svg style="left:6px;top:504px" width="8" height="7" viewBox="0 0 8 7"><path d="M0.500 0.800h7l-3.500 5z" fill="#8a8a8a"/></svg>
    </div>
    <div id="edit"></div>
    <div id="slide">
      <div class="t" id="stitle" style="left:43px;top:38px;">Using language vividly</div>
      <div class="abs" style="left:42px;top:78.400px;width:521px;height:1px;background:#8db3e2;"></div>
      <div class="t" id="ssub" style="left:2px;width:600px;text-align:center;top:113.300px;">Design, a matter of communication</div>
      <div id="sbody">
        <div class="ln" style="padding-left:30px;">Ladies and gentlemen. Could you communicate your ideas</div>
        <div class="ln">to a total stranger without saying a word? The answer is yes.</div>
        <div class="ln">Chinese philosopher Laozi once said: “Loud is its sound, but</div>
        <div class="ln">never word it said.” An amateur designer as I am, my design is</div>
        <div class="ln">a product of communication, while a carrier of thoughts</div>
        <div class="ln" style="text-align-last:left;">speaking for itself.</div>
      </div>
    </div>
    <div id="notes"><div class="t" style="left:6px;top:5.500px;font:8.800px 'Liberation Serif','Noto Serif CJK SC',serif;color:#9a9a9a;">单击此处添加备注</div></div>
    <div id="status">
      <div class="t st" style="left:16px;top:3.300px;font-size:9px;">幻灯片 48 / 103</div>
      <div class="t st" style="left:92.500px;top:3.300px;font-size:8.800px;">中文(中国)</div>
      <svg style="left:680px;top:0" width="320" height="16" viewBox="680 0 320 16" fill="none" stroke="#6e6e6e" stroke-width="0.900" stroke-linecap="round">
        <path d="M684.500 7h7M684.500 9.500h7M686 12h4M687 4.500h2"/>
        <path d="M727.500 4.200h8.500v6h-4.500l-2 2v-2h-2z" fill="#555" stroke="#555" stroke-width="0.600"/>
        <rect x="765" y="0" width="25.500" height="16" fill="#bfbfbf" stroke="none"/>
        <rect x="773" y="3.600" width="9.600" height="8.600" fill="#fafafa" stroke="#f4f4f4" stroke-width="1"/>
        <path d="M776.300 4v8M777.600 6h3.600M777.600 9h3.600" stroke="#9a9a9a" stroke-width="0.800"/>
        <g fill="#5d5d5d" stroke="none"><rect x="798" y="4" width="4" height="3"/><rect x="803.800" y="4" width="4" height="3"/><rect x="798" y="9" width="4" height="3"/><rect x="803.800" y="9" width="4" height="3"/></g>
        <rect x="824" y="4.200" width="9.400" height="5.600" stroke="#6a6a6a" stroke-width="0.900"/>
        <path d="M828.700 10v2.600M826.300 12.800h4.800" stroke="#6a6a6a"/>
        <path d="M846.300 8h4.600" stroke="#555" stroke-width="1.100"/>
        <path d="M858 8h68.500" stroke="#adadad" stroke-width="2.200"/>
        <circle cx="893.300" cy="8" r="3.300" fill="#fdfdfd" stroke="#cfcfcf" stroke-width="0.500"/>
        <path d="M933 8h4.800M935.400 5.600v4.800" stroke="#555" stroke-width="1.100"/>
        <rect x="984" y="3.600" width="8" height="8.800" stroke="#6a6a6a" stroke-width="0.900"/>
        <path d="M986 8h4" stroke="#6a6a6a" stroke-width="0.900"/>
      </svg>
      <div class="t st" style="left:696px;top:3.500px;color:#777;">备注</div>
      <div class="t st" style="left:740px;top:3.500px;color:#777;">批注</div>
      <div class="t st" style="left:951.500px;top:4px;font-size:8.200px;color:#808080;">119%</div>
    </div>
  </div>
</div>

<!-- ===== VIDEO OVERLAYS ===== -->
<div class="abs" style="left:71px;top:666px;width:106px;height:14px;background:rgba(0,0,0,.52);"></div>
<svg style="left:71px;top:666px" width="30" height="14" viewBox="0 0 30 14" fill="none">
  <rect x="1.600" y="2.200" width="9" height="6.600" rx="0.800" fill="#f2f2f2"/>
  <path d="M4 7.200l2.600-2.600M6.600 4.600h-2M6.600 4.600v2" stroke="#222" stroke-width="0.800"/>
  <path d="M3.600 11h5M6.100 9v2" stroke="#f2f2f2" stroke-width="1"/>
  <rect x="17.200" y="1.600" width="3.600" height="6.600" rx="1.800" fill="#3ed35a"/>
  <path d="M15.400 6.200a3.600 3.600 0 0 0 7.200 0M19 9.800v1.600M17 11.600h4" stroke="#e9e9e9" stroke-width="0.900" stroke-linecap="round"/>
</svg>
<div class="t" style="left:98.500px;top:669.300px;font-size:8.200px;color:#f0f0f0;letter-spacing:-0.05px;">Rongrong的屏幕共享</div>
<div class="abs" style="left:1120px;top:665px;width:79px;height:15px;background:#2b2b2b;border-radius:4px 0 0 0;"></div>
<div class="t" style="left:1123.500px;top:668.800px;font-size:8px;color:#f4f4f4;letter-spacing:-0.42px;">2023/01/31 18:44:57</div>

<svg style="left:223px;top:463px" width="12" height="16" viewBox="0 0 12 16"><path d="M1.600 1.200v11.200l2.700-2.500 1.900 4.300 1.900-.8-1.900-4.200h3.600z" fill="#111" stroke="#f4f4f4" stroke-width="0.900" stroke-linejoin="round"/></svg>

<!-- ===== CONTROL BAR ===== -->
<div id="ctrl">
  <svg style="left:0;top:0" width="671" height="46" viewBox="299 592 671 46" fill="none" stroke="#fff" stroke-width="1.150" stroke-linecap="round" stroke-linejoin="round">
    <!-- pause -->
    <rect x="315.200" y="608.800" width="5.300" height="13.300" rx="0.600" fill="#fff" stroke="none"/>
    <rect x="323.700" y="608.800" width="5.300" height="13.300" rx="0.600" fill="#fff" stroke="none"/>
    <!-- replay 10 -->
    <path d="M357.600 613.400c2.600-4.600 9.600-4.600 12 .4"/>
    <path d="M357.300 609.400v4.200h4.200"/>
    <!-- forward 30 -->
    <path d="M410.200 613.400c-2.600-4.600-9.600-4.600-12 .4"/>
    <path d="M410.500 609.400v4.200h-4.200"/>
    <!-- mute -->
    <path d="M437.600 612.600h2.400l3.800-3v10.800l-3.800-3h-2.400z"/>
    <path d="M446.800 612.600l4.800 4.800M451.600 612.600l-4.800 4.800"/>
    <!-- track -->
    <path d="M519.400 615.100h92" stroke="#c3f56c" stroke-width="4.300"/>
    <path d="M626 615.100h164.600" stroke="#a3a3a5" stroke-width="4.300"/>
    <circle cx="615.900" cy="615.100" r="9.300" fill="#454545" stroke="none"/>
    <circle cx="615.900" cy="615.100" r="5.100" fill="#c3f56c" stroke="none"/>
    <!-- loop off -->
    <path d="M858.400 614.600a5.600 5.600 0 0 1 5.600-4.600h4.600M871.800 616.400a5.600 5.600 0 0 1-5.600 4.600h-4.600"/>
    <path d="M867 607.800l2.400 2.200-2.400 2.200M863.200 618.800l-2.400 2.200 2.400 2.200"/>
    <path d="M858.400 608.400l13.600 14"/>
    <!-- dots -->
    <g fill="#fff" stroke="none"><circle cx="901.400" cy="615.600" r="1.100"/><circle cx="906.200" cy="615.600" r="1.100"/><circle cx="911" cy="615.600" r="1.100"/></g>
    <!-- clipchamp -->
    <path d="M937.800 610.600l16.600-4.600c1-.3 1.900.3 2 1.300l.2 2.700-18.800 3.400z" fill="#c94fe0" stroke="none"/>
    <rect x="937.800" y="612.200" width="18.800" height="12.800" rx="1.200" fill="#6a3cf0" stroke="none"/>
    <path d="M937.800 612.200h18.800v3.400h-7v3.600h-5.600v3h-6.200z" fill="#d477f2" stroke="none"/>
    <path d="M937.800 622.200h18.800v1.600a1.200 1.200 0 0 1-1.200 1.200h-16.400a1.200 1.200 0 0 1-1.200-1.200z" fill="#4b2bdc" stroke="none"/>
  </svg>
  <div class="t" style="left:58.400px;top:21.600px;font-size:9.400px;color:#fff;letter-spacing:-0.5px;">10</div>
  <div class="t" style="left:99.600px;top:21.600px;font-size:9.400px;color:#fff;letter-spacing:-0.5px;">30</div>
  <div class="t" style="left:173.600px;top:18.300px;font-size:11px;color:#fff;letter-spacing:-0.25px;">44:52</div>
  <div class="t" style="left:510.800px;top:18.300px;font-size:11px;color:#fff;letter-spacing:-0.25px;">83:08</div>
</div>

<!-- ===== TASKBAR ===== -->
<div id="taskbar">
  <!-- highlighted buttons -->
  <div class="abs" style="left:457px;top:0;width:45px;height:37px;background:#b1692a;"></div>
  <div class="abs" style="left:498px;top:0;width:4px;height:37px;background:#a65f23;"></div>
  <div class="abs" style="left:594px;top:0;width:45px;height:37px;background:#5b6056;"></div>
  <!-- running indicators -->
  <div class="ind" style="left:141px;width:37px;"></div><div class="ind d" style="left:170px;width:8px;"></div>
  <div class="ind" style="left:278px;width:37px;"></div>
  <div class="ind" style="left:324px;width:37px;"></div>
  <div class="ind" style="left:369.500px;width:37px;"></div>
  <div class="ind" style="left:415px;width:37.500px;"></div>
  <div class="ind" style="left:457px;width:45px;background:#f57a10;"></div>
  <div class="ind" style="left:507px;width:37px;"></div><div class="ind d" style="left:536.500px;width:7.500px;"></div>
  <div class="ind" style="left:552.500px;width:37px;"></div>
  <div class="ind" style="left:594px;width:45px;background:#dfeeb4;"></div>
  <svg style="left:0;top:0" width="1269" height="37" viewBox="0 680 1269 37" fill="none" stroke-linecap="round" stroke-linejoin="round">
    <!-- start -->
    <path d="M15 692.700l6.400-.9v6h-6.400zM22.300 691.700l8-1.200v7.300h-8zM15 698.700h6.400v6l-6.400-.9zM22.300 698.700h8v7.300l-8-1.200z" fill="#fff"/>
    <!-- search -->
    <circle cx="69.800" cy="696" r="4.900" stroke="#fff" stroke-width="1.300"/>
    <path d="M66.400 699.600l-5.800 5.800" stroke="#fff" stroke-width="1.300"/>
    <!-- task view -->
    <path d="M104.400 691.600h9.400M104.400 704.200h9.400" stroke="#fff" stroke-width="1.100"/>
    <rect x="105.600" y="694.400" width="7.200" height="7" stroke="#fff" stroke-width="1.200"/>
    <path d="M118.300 696.800v7.400" stroke="#fff" stroke-width="1.200"/><circle cx="118.300" cy="693.200" r="1.100" fill="#fff"/>
    <!-- explorer -->
    <path d="M149.200 691.200a1 1 0 0 1 1-1h5.600l1.600 1.600h11a1 1 0 0 1 1 1v12.600h-20.200z" fill="#f0b429"/>
    <path d="M149.200 693.400h20.200v11.200a1 1 0 0 1-1 1h-18.200a1 1 0 0 1-1-1z" fill="#fbd562"/>
    <path d="M153.600 706.200v-5a1 1 0 0 1 1-1h9.400a1 1 0 0 1 1 1v5h-3v-3.200h-5.400v3.200z" fill="#3b8de0"/>
    <!-- edge -->
    <circle cx="205.400" cy="698" r="11.200" fill="#1f8fe0"/>
    <path d="M194.400 696c1.200-6 6.400-9.400 11.600-9.200 6 .2 10.600 4.800 10.600 10.400 0 3-2.400 5-5.200 5-2 0-3.600-.8-4-2.200 1-.8 1.600-2 1.400-3.400-.4-2.200-2.600-3.800-5.400-3.800-4 0-7.400 2.600-9 3.200z" fill="#45d06a"/>
    <path d="M194.400 696c2-3.400 5.600-5 9.200-4.600 3.600.4 6 2.800 5.800 5.400-.2 1.400-.8 2.400-1.800 3.200-.2-2.400-2.200-4.400-5-4.400-3.600 0-6.200 3-6 6.600.2 3 2 5.400 4.400 6.600-4.400-1-7.200-5.400-6.600-12.800z" fill="#1565c6"/>
    <path d="M198 706.400c3 3.400 9 3.800 13.200.6 1.400-1 2.400-2.200 3-3.400-2.600 1.600-6.800 1.600-9.400-.8-1-.9-1.600-2-1.800-3.200-2.600.6-5.600 3.400-5 6.800z" fill="#0c4fa8"/>
    <!-- 360 -->
    <circle cx="250.900" cy="698.100" r="10.500" fill="#f4d90a"/>
    <path d="M240.700 700.600c1.400 5 6 8.400 11.400 7.900-4.200-.6-6.800-3.600-7.400-6.600-.4-2 .2-4 1.800-5.200-2.600-.4-5 1.200-5.800 3.900z" fill="#4cae2c"/>
    <path d="M261.100 695.600c-1.400-5-6-8.400-11.400-7.900 4.200.6 6.800 3.600 7.400 6.600.4 2-.2 4-1.800 5.200 2.600.4 5-1.200 5.800-3.900z" fill="#4cae2c"/>
    <path d="M250.900 693.600v9M246.400 698.100h9" stroke="#2f9e2a" stroke-width="2.500" stroke-linecap="butt"/>
    <!-- word -->
    <path d="M291.600 687.800h15.600a1.200 1.200 0 0 1 1.200 1.200v4.200h-16.800z" fill="#41a5ee"/>
    <rect x="291.600" y="693.200" width="16.800" height="5.200" fill="#2b7cd3"/>
    <rect x="291.600" y="698.400" width="16.800" height="5.200" fill="#185abd"/>
    <path d="M291.600 703.600h16.800v3.800a1.200 1.200 0 0 1-1.200 1.200h-15.600z" fill="#103f91"/>
    <rect x="285.400" y="692" width="13.200" height="13" rx="1.200" fill="#185abd"/>
    <!-- green e -->
    <circle cx="342.500" cy="698.200" r="9.600" fill="#5dbb2e" stroke="#e8f2e0" stroke-width="1.200"/>
    <path d="M334.400 706.800c-1.400-6 3-14.800 15.800-18.600" stroke="#62c02e" stroke-width="1.300"/>
    <path d="M337.600 698.600h10c0-3-2.200-5.200-5-5.200s-5 2.200-5 5.200 2.200 5.200 5 5.200c2 0 3.600-.8 4.600-2.400" stroke="#fff" stroke-width="2.100"/>
    <!-- webex -->
    <rect x="377.300" y="687.800" width="21.600" height="21.200" rx="4.400" fill="#0c0d12"/>
    <ellipse cx="384.600" cy="698.400" rx="3.200" ry="5.200" stroke="#1b9cf2" stroke-width="2.800"/>
    <ellipse cx="391.800" cy="698.400" rx="3.200" ry="5.200" stroke="#1b9cf2" stroke-width="2.800"/>
    <path d="M391.800 693.200a3.200 5.200 0 0 1 3.200 5.200" stroke="#2fd06e" stroke-width="2.800"/>
    <path d="M384.600 703.600a3.200 5.200 0 0 1-3.200-5.200" stroke="#0f6fd8" stroke-width="2.800"/>
    <!-- acorn -->
    <path d="M423.200 699.600c0-6 4.600-10 10-10s10 4 10 10c0 4.600-4.600 8.400-10 9.400-5.400-1-10-4.800-10-9.400z" fill="#f7c98a"/>
    <path d="M429.200 689.400c5.600-2.600 12.600.4 14.400 6.800.6 2.200 0 3.800-1 4.600-2.400-6-7.800-9.800-14-9.600-1 0-.6-1.200.6-1.800z" fill="#a3582a"/>
    <path d="M439.600 690.400c.8-1.600 2-2.400 3.400-2.400" stroke="#8a4a1e" stroke-width="1.600"/>
    <!-- wechat -->
    <ellipse cx="476.300" cy="695.800" rx="8.200" ry="7" fill="#3fd05c"/>
    <path d="M471 700.800l-1.400 3.400 4-2z" fill="#3fd05c"/>
    <ellipse cx="484.200" cy="700.800" rx="6.800" ry="5.800" fill="#ececec"/>
    <path d="M487.600 705.400l1.600 2.400-.2-3.200z" fill="#ececec"/>
    <g fill="#2f9a44"><circle cx="473.400" cy="693.600" r="1"/><circle cx="479" cy="693.600" r="1"/></g>
    <g fill="#9a9a9a"><circle cx="482" cy="699.200" r=".9"/><circle cx="486.400" cy="699.200" r=".9"/></g>
    <!-- tencent meeting -->
    <rect x="515.300" y="688.200" width="20.300" height="19.800" rx="3.600" fill="#1d74ff"/>
    <path d="M518.400 702.200l4.600-6.600 2.600 3.200 2.600-3.800 4.600 7.200h-4.600l-2.600-3.600-2.400 3.600z" fill="#fff"/>
    <path d="M518.400 702.200l3.200-4.600 1.400 2-1.800 2.600z" fill="#b9d6ff"/>
    <!-- wps -->
    <path d="M561.600 691.400l4.400 13.400 4.600-11 4.400 11" stroke="#ee1c1c" stroke-width="3.400" stroke-linejoin="miter" stroke-linecap="butt"/>
    <path d="M575 704.800l5.600-13.400" stroke="#ff5a1a" stroke-width="3.400" stroke-linecap="butt"/>
    <path d="M570.600 693.800l2 5" stroke="#ff6a2a" stroke-width="2.600" stroke-linecap="butt"/>
    <!-- photos -->
    <rect x="606.800" y="688.200" width="20" height="20.400" rx="2" fill="#2a9fe8"/>
    <path d="M606.800 702l7-8.600 6.400 7 2.400-2.400 4.200 4.600v4a2 2 0 0 1-2 2h-16a2 2 0 0 1-2-2z" fill="#17438f"/>
    <path d="M618.200 698.400l2-2.200 6.600 7v2.600z" fill="#3f6ec4" opacity=".85"/>
    <circle cx="620.600" cy="692.800" r="1.500" fill="#fff"/>
    <!-- tray: usb -->
    <rect x="988" y="694" width="9.400" height="11" rx="1.400" fill="#38b53c"/>
    <rect x="989.600" y="691" width="6.200" height="3.600" fill="#f2f2f2"/>
    <path d="M992.700 697v5.400M990.800 698.800l1.900 1.400 1.900-1.400M991.400 701.400l1.300 1.400 1.300-1.400" stroke="#e8ffe8" stroke-width=".8"/>
    <!-- chevron -->
    <path d="M1013.600 701.600l5.400-5.600 5.400 5.600" stroke="#fff" stroke-width="1.300"/>
    <!-- battery/plug -->
    <rect x="1039" y="695" width="10" height="7.400" rx=".8" stroke="#fff" stroke-width="1.100"/>
    <path d="M1049.600 697.200v3" stroke="#fff" stroke-width="1.200"/>
    <path d="M1036 693.600v3M1038 693.600v3M1034.800 696.800h4.400v2a2.200 2.200 0 0 1-4.400 0zM1037 701v2.400" stroke="#fff" stroke-width="1"/>
    <!-- volume -->
    <path d="M1056.600 696.400h2.400l3.600-3.200v10.800l-3.600-3.200h-2.400z" stroke="#fff" stroke-width="1.100"/>
    <path d="M1065 696.200a3.400 3.400 0 0 1 0 4.800M1067.200 694.200a6.200 6.200 0 0 1 0 8.800M1069.400 692.400a9 9 0 0 1 0 12.400" stroke="#fff" stroke-width="1"/>
    <!-- wifi -->
    <path d="M1081.600 703.400a11 11 0 0 1 11-10.400" stroke="#9a9a9a" stroke-width="1.200"/>
    <path d="M1084.600 704a8 8 0 0 1 8-7.600" stroke="#c9c9c9" stroke-width="1.300"/>
    <path d="M1087.600 704.400a5 5 0 0 1 5-4.800" stroke="#e0e0e0" stroke-width="1.300"/>
    <circle cx="1091.800" cy="704" r="1.300" fill="#fff"/>
    <!-- sogou -->
    <path d="M1130.200 692.200l10-1.400a1.600 1.600 0 0 1 1.800 1.400l1 10.600a1.600 1.600 0 0 1-1.400 1.800l-10 1.400a1.600 1.600 0 0 1-1.800-1.400l-1-10.600a1.600 1.600 0 0 1 1.400-1.800z" fill="#f24e1e"/>
    <path d="M1139.400 695c-2.400-1.200-6.600-.8-6.600 1.400 0 2.400 6.400 1.400 6.600 4 .2 2.200-4.400 2.600-7 1.200" stroke="#fff" stroke-width="1.700"/>
    <!-- notification -->
    <path d="M1231.600 691h13.400v10.600h-9.600l-3.800 3.400z" fill="#fff"/>
    <path d="M1234 694h8.600M1234 696.600h8.600M1234 699.200h5" stroke="#2c3226" stroke-width=".9"/>
    <circle cx="1245" cy="705" r="6.400" fill="#2a2a2a" stroke="#bdbdbd" stroke-width=".9"/>
    <!-- show desktop -->
    <path d="M1265.500 680v37" stroke="#6f7468" stroke-width="1"/>
  </svg>
  <div class="t" style="left:287.300px;top:13.400px;font-size:10.500px;font-weight:bold;color:#fff;">W</div>
  <div class="t" style="left:1102.500px;top:12px;font-size:12px;color:#fff;">中</div>
  <div class="t" style="left:1159px;top:4px;font-size:12px;color:#fff;letter-spacing:-0.35px;">13:56 周五</div>
  <div class="t" style="left:1161px;top:19.500px;font-size:12px;color:#fff;letter-spacing:0.15px;">2023/2/3</div>
  <div class="t" style="left:1242.300px;top:20.300px;font-size:9.500px;font-weight:bold;color:#fff;">2</div>
</div>

</div>
</body>
</html>
